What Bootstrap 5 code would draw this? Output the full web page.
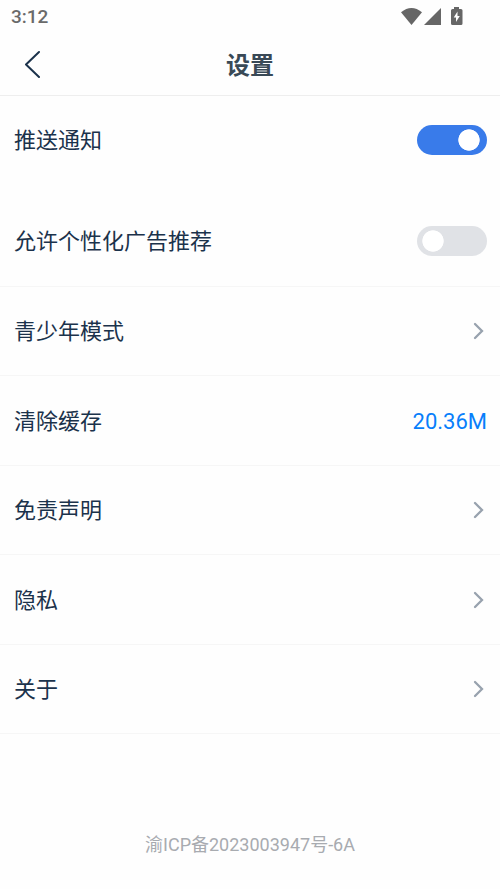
<!DOCTYPE html>
<html lang="zh-CN">
<head>
<meta charset="utf-8">
<meta name="viewport" content="width=device-width, initial-scale=1">
<title>设置</title>
<link href="https://cdn.jsdelivr.net/npm/bootstrap@5.3.0/dist/css/bootstrap.min.css" rel="stylesheet">
<style>
body { font-family: Roboto, "Noto Sans CJK SC", sans-serif; color: #1b324b; background: #fefefe; font-size: 22px; line-height: 32px; }
.status-bar { height: 34px; padding: 0 37px 0 11px; font-size: 19px; font-weight: 500; color: #6a6a6a; }
.title-bar { display: grid; grid-template-columns: 50px 1fr 50px; height: 62px; padding: 0 8px; border-bottom: 1px solid #eee; }
.title-bar h1 { padding-top: 2px; font-size: 24px; line-height: 32px; font-weight: 700; color: #394956; }
.back-arrow { margin-bottom: 2px; }
.setting-row { min-height: 89px; padding: 0 13px 0 14px; border: 0; border-bottom: 1px solid #f6f6f6; color: inherit; background: transparent; text-align: left; text-decoration: none; }
.setting-row:nth-child(even) { min-height: 90px; }
.setting-row span, .switch-row label { padding-top: 2px; }
.switch-row { min-height: 88px; padding: 0 13px 0 14px; }
.switch-row + .switch-row { min-height: 91px; margin-top: 12px; border-bottom: 1px solid #f6f6f6; }
.toggle.form-check-input { width: 70px; height: 30px; margin: 0; border: 0; border-radius: 15px; background: #e0e2e6 radial-gradient(circle closest-side, #fff 94%, transparent) no-repeat 5px 50% / 22px 22px; }
.toggle.form-check-input:checked { background-color: #397bea; background-position: 41px 50%; }
.chevron { margin-right: 3px; }
.setting-row .cache-size { color: #087efb; }
.filing { padding-bottom: 28px; font-size: 18px; color: #a8abb0; }
</style>
<script defer src="https://cdn.jsdelivr.net/npm/bootstrap@5.3.0/dist/js/bootstrap.bundle.min.js"></script>
</head>
<body class="min-vh-100 d-flex flex-column">
<div class="status-bar d-flex align-items-center justify-content-between">
  <time>3:12</time>
  <svg width="62" height="22" viewBox="0 0 62 22" fill="#666" aria-hidden="true">
    <path d="M0 6.3Q10.5-2.5 21 6.3L10.5 19Z"/>
    <path d="M23 19 40 2V19Z"/>
    <path fill-rule="evenodd" d="M53 3V1h5v2h2q1.500 0 1.500 1.500V17.500Q61.500 19 60 19H51.500Q50 19 50 17.500V4.500Q50 3 51.500 3ZM56.500 5.500 52.700 11.500H55V16L58.800 10H56.500Z"/>
  </svg>
</div>
<header class="title-bar align-items-center">
  <button type="button" class="btn p-0 border-0 d-flex align-items-center ps-3" aria-label="返回">
    <svg class="back-arrow" width="18" height="28" viewBox="0 0 18 28" fill="none" stroke="#1b324b" stroke-width="2" stroke-linecap="round" stroke-linejoin="round" aria-hidden="true"><path d="M15 2 2 14.500 15 27"/></svg>
  </button>
  <h1 class="mb-0 text-center">设置</h1>
</header>
<main>
  <section>
    <div class="switch-row d-flex align-items-center justify-content-between">
      <label for="push">推送通知</label>
      <input class="form-check-input toggle" type="checkbox" role="switch" id="push" checked>
    </div>
    <div class="switch-row d-flex align-items-center justify-content-between">
      <label for="ads">允许个性化广告推荐</label>
      <input class="form-check-input toggle" type="checkbox" role="switch" id="ads">
    </div>
  </section>
  <nav class="d-flex flex-column" aria-label="设置">
    <a href="#" class="setting-row d-flex align-items-center justify-content-between"><span>青少年模式</span>
      <svg class="chevron" width="12" height="18" viewBox="0 0 12 18" fill="none" stroke="#98a2ae" stroke-width="2.300" stroke-linecap="round" aria-hidden="true"><path d="M3 2 10 9 3 16"/></svg></a>
    <button type="button" class="setting-row d-flex align-items-center justify-content-between"><span>清除缓存</span> <span class="cache-size">20.36M</span></button>
    <a href="#" class="setting-row d-flex align-items-center justify-content-between"><span>免责声明</span>
      <svg class="chevron" width="12" height="18" viewBox="0 0 12 18" fill="none" stroke="#98a2ae" stroke-width="2.300" stroke-linecap="round" aria-hidden="true"><path d="M3 2 10 9 3 16"/></svg></a>
    <a href="#" class="setting-row d-flex align-items-center justify-content-between"><span>隐私</span>
      <svg class="chevron" width="12" height="18" viewBox="0 0 12 18" fill="none" stroke="#98a2ae" stroke-width="2.300" stroke-linecap="round" aria-hidden="true"><path d="M3 2 10 9 3 16"/></svg></a>
    <a href="#" class="setting-row d-flex align-items-center justify-content-between"><span>关于</span>
      <svg class="chevron" width="12" height="18" viewBox="0 0 12 18" fill="none" stroke="#98a2ae" stroke-width="2.300" stroke-linecap="round" aria-hidden="true"><path d="M3 2 10 9 3 16"/></svg></a>
  </nav>
</main>
<footer class="filing mt-auto text-center">渝ICP备2023003947号-6A</footer>
</body>
</html>
